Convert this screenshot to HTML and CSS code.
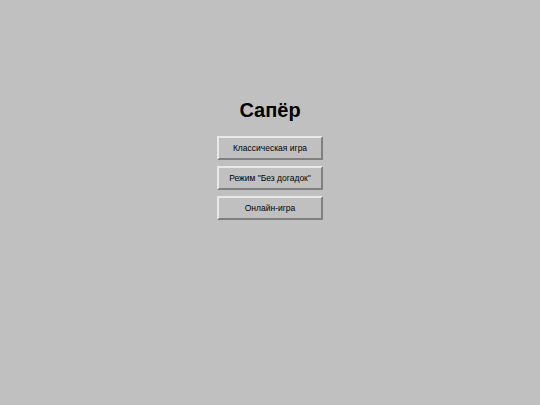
FILE: index.html
```html
<!DOCTYPE html>
<html lang="ru">
<head>
<meta charset="utf-8">
<title>Сапёр</title>
<link rel="stylesheet" href="styles.css">
</head>
<body>
<main class="menu">
  <h1 class="title">Сапёр</h1>
  <button class="btn">Классическая игра</button>
  <button class="btn">Режим "Без догадок"</button>
  <button class="btn">Онлайн-игра</button>
</main>
</body>
</html>
```
FILE: styles.css
```css
html, body {
  margin: 0;
  height: 100%;
  background: #c0c0c0;
  font-family: "Liberation Sans", Arial, sans-serif;
}
.menu {
  display: flex;
  flex-direction: column;
  align-items: center;
  padding-top: 97px;
  gap: 6px;
}
.title {
  margin: 0 0 7px;
  font-size: 20px;
  font-weight: bold;
  line-height: 26px;
  color: #000;
}
.btn {
  width: 106px;
  height: 24px;
  box-sizing: border-box;
  background: #c0c0c0;
  border: 2px solid;
  border-color: #e8e8e8 #808080 #808080 #e8e8e8;
  font-family: "Liberation Sans", Arial, sans-serif;
  font-size: 8.5px;
  color: #000;
  padding: 0;
}
```
